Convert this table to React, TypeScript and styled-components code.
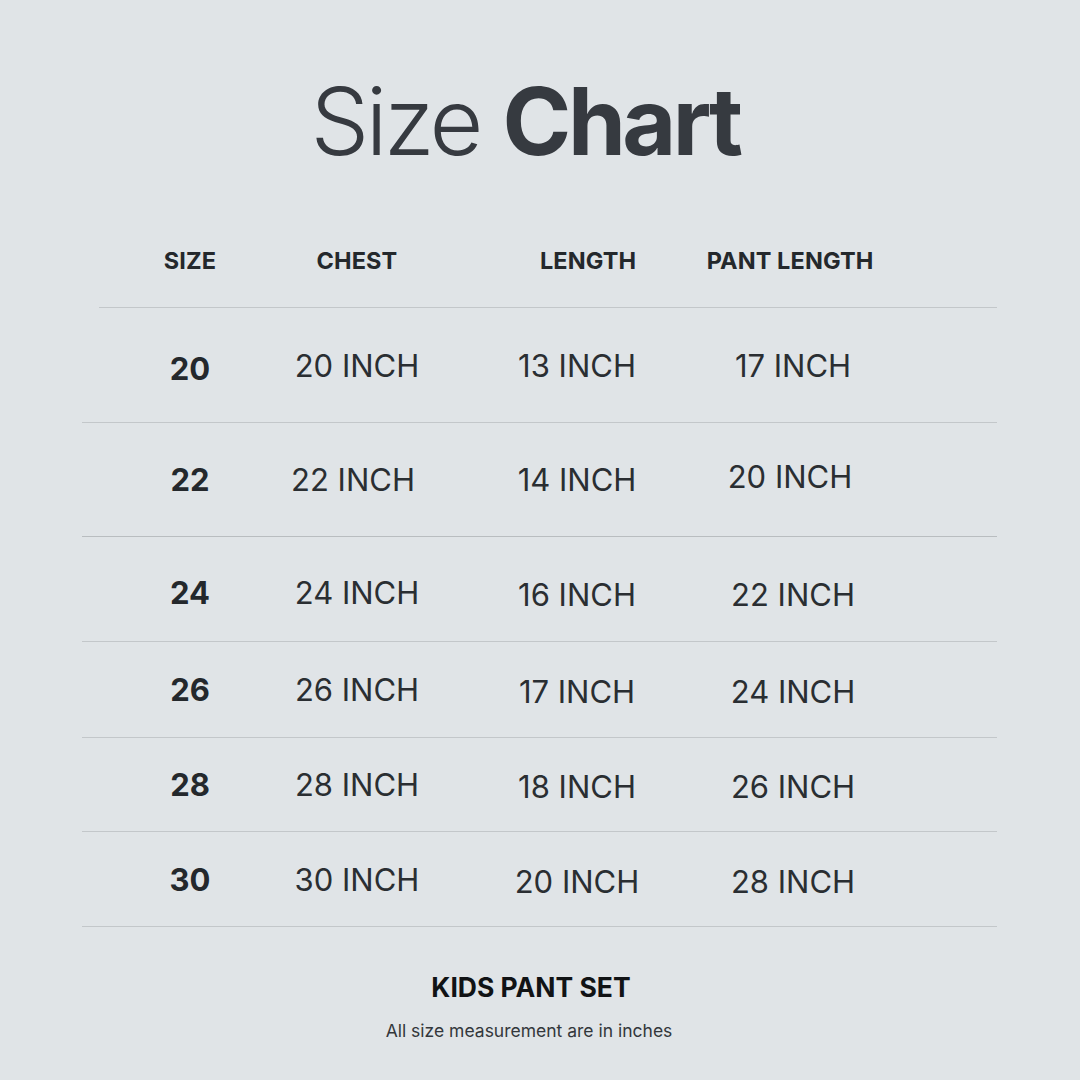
import React from "react";
import styled, { createGlobalStyle } from "styled-components";

const Global = createGlobalStyle`
  html, body { margin: 0; padding: 0; background: #e0e4e7; }
  body { font-family: Inter, "Noto Sans", sans-serif; }
`;

const Page = styled.div`
  width: 1080px;
  height: 1080px;
  background: #e0e4e7;
  display: flex;
  flex-direction: column;
  box-sizing: border-box;
  padding-top: 74px;
`;

const Title = styled.h1`
  margin: 0;
  height: 94px;
  font-family: Inter, sans-serif;
  font-size: 93px;
  line-height: 94px;
  font-weight: 300;
  letter-spacing: -3.5px;
  color: #363a40;
  text-align: center;
  padding-right: 30px;
  b { font-weight: 700; letter-spacing: -3.5px; }
`;

const Table = styled.div`
  margin-top: 59px;
  display: flex;
  flex-direction: column;
`;

const Row = styled.div<{ $cols: string; $h: number; $pl: number; $ml: number; $shift?: number; $line?: string }>`
  display: grid;
  grid-template-columns: ${(p) => p.$cols};
  align-items: center;
  justify-items: center;
  box-sizing: border-box;
  height: ${(p) => p.$h}px;
  margin-left: ${(p) => p.$ml}px;
  width: ${(p) => 997 - p.$ml}px;
  padding-left: ${(p) => p.$pl}px;
  padding-top: ${(p) => p.$shift || 0}px;
  border-bottom: 1px solid ${(p) => p.$line || "#c3c7ca"};
`;

const HeadCell = styled.div`
  font-family: Inter, sans-serif;
  font-weight: 700;
  font-size: 23.5px;
  letter-spacing: 0.1px;
  line-height: 1;
  color: #24282c;
  white-space: nowrap;
  padding-bottom: 12px;
`;

const SizeCell = styled.div<{ $dy?: number }>`
  font-family: Inter, sans-serif;
  font-weight: 700;
  font-size: 31px;
  line-height: 1;
  color: #24282c;
  white-space: nowrap;
  position: relative;
  top: ${(p) => p.$dy || 0}px;
`;

const ValueCell = styled.div<{ $dy?: number; $dx?: number }>`
  font-family: Inter, sans-serif;
  font-weight: 400;
  font-size: 31px;
  line-height: 1;
  color: #2a2e32;
  white-space: nowrap;
  position: relative;
  top: ${(p) => p.$dy || 0}px;
  left: ${(p) => p.$dx || 0}px;
`;

const Footer = styled.div`
  display: flex;
  flex-direction: column;
  align-items: center;
  padding-right: 22px;
  margin-top: 45px;
`;

const FooterTitle = styled.div`
  font-family: Inter, sans-serif;
  font-weight: 700;
  font-size: 26.5px;
  line-height: 30px;
  color: #111315;
  padding-left: 4px;
`;

const FooterNote = styled.div`
  margin-top: 18px;
  font-family: Inter, sans-serif;
  font-weight: 400;
  font-size: 17.5px;
  line-height: 22px;
  color: #33373b;
`;

const BODY_COLS = "164px 170px 270px 162px";
const HEAD_COLS = "120px 214px 248px 156px";

type R = {
  size: string;
  chest: string;
  len: string;
  pant: string;
  h: number;
  shift?: number;
  d?: [number, number, number, number];
  x?: [number, number, number];
  line?: string;
};

const rows: R[] = [
  { size: "20", chest: "20 INCH", len: "13 INCH", pant: "17 INCH", h: 115, d: [3, 0, 0, 0] },
  { size: "22", chest: "22 INCH", len: "14 INCH", pant: "20 INCH", h: 114, d: [0, 0, 0, -3], x: [-4, 0, -3], line: "#b9bdc0" },
  { size: "24", chest: "24 INCH", len: "16 INCH", pant: "22 INCH", h: 105, shift: 6, d: [0, 0, 2, 2] },
  { size: "26", chest: "26 INCH", len: "17 INCH", pant: "24 INCH", h: 96, d: [0, 0, 2, 2] },
  { size: "28", chest: "28 INCH", len: "18 INCH", pant: "26 INCH", h: 94, d: [0, 0, 2, 2] },
  { size: "30", chest: "30 INCH", len: "20 INCH", pant: "28 INCH", h: 95, d: [0, 0, 2, 2] },
];

export default function App() {
  return (
    <>
      <Global />
      <Page>
        <Title>
          Size <b>Chart</b>
        </Title>
        <Table>
          <Row $cols={HEAD_COLS} $h={81} $pl={31} $ml={99}>
            <HeadCell>SIZE</HeadCell>
            <HeadCell>CHEST</HeadCell>
            <HeadCell>LENGTH</HeadCell>
            <HeadCell>PANT LENGTH</HeadCell>
          </Row>
          {rows.map((r) => (
            <Row key={r.size} $cols={BODY_COLS} $h={r.h} $pl={26} $ml={82} $shift={r.shift} $line={r.line}>
              <SizeCell $dy={r.d?.[0]}>{r.size}</SizeCell>
              <ValueCell $dy={r.d?.[1]} $dx={r.x?.[0]}>{r.chest}</ValueCell>
              <ValueCell $dy={r.d?.[2]} $dx={r.x?.[1]}>{r.len}</ValueCell>
              <ValueCell $dy={r.d?.[3]} $dx={r.x?.[2]}>{r.pant}</ValueCell>
            </Row>
          ))}
        </Table>
        <Footer>
          <FooterTitle>KIDS PANT SET</FooterTitle>
          <FooterNote>All size measurement are in inches</FooterNote>
        </Footer>
      </Page>
    </>
  );
}
